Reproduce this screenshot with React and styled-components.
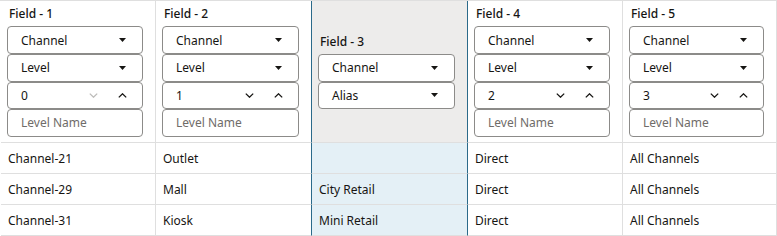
import React from "react";
import styled, { createGlobalStyle } from "styled-components";

const Global = createGlobalStyle`
  html, body { margin: 0; padding: 0; background: #fff; }
  body { font-family: "Noto Sans", "Liberation Sans", sans-serif; color: #161513; }
`;

const GRID = "155px 156px 156px 155px 154px";
const BLUE = "#2b6a8a";
const LINE = "#dfdfdf";

const Table = styled.div`
  display: grid;
  grid-template-columns: ${GRID};
  width: 777px;
  box-sizing: border-box;
  padding-left: 1px;
  border-top: 1px solid ${LINE};
`;

const HeadCell = styled.div`
  box-sizing: border-box;
  height: 142px;
  display: flex;
  flex-direction: column;
  justify-content: center;
  padding: 0 12px 0 6px;
  background: ${(p) => (p.$active ? "#edeceb" : "#fff")};
  border-right: 1px solid ${(p) => (p.$edge ? BLUE : LINE)};
  border-bottom: 1px solid ${LINE};
`;

const Label = styled.div`
  font-size: 12px;
  font-weight: 500;
  line-height: 16px;
  padding-left: 2px;
  margin-bottom: 4px;
`;

const Box = styled.div`
  box-sizing: border-box;
  height: 27.6px;
  border: 1px solid #8c8b89;
  border-radius: 4px;
  background: #fff;
  display: flex;
  align-items: center;
  padding: 0 0 0 13px;
  font-size: 12px;
  color: ${(p) => (p.$placeholder ? "#6f6c69" : "#161513")};
`;

const BoxText = styled.span`
  flex: 1;
`;

const IconSlot = styled.span`
  width: 29px;
  display: flex;
  justify-content: center;
  align-items: center;
  color: ${(p) => (p.$disabled ? "#bdbcba" : "#161513")};
  &:last-child { margin-right: 5px; }
`;

const Cell = styled.div`
  box-sizing: border-box;
  height: 31px;
  display: flex;
  align-items: center;
  padding-left: 7px;
  font-size: 12px;
  background: ${(p) => (p.$active ? "#e4f0f6" : "#fff")};
  border-right: 1px solid ${(p) => (p.$edge ? BLUE : LINE)};
  border-bottom: 1px solid ${LINE};
`;

const Caret = () => (
  <svg width="7" height="4" viewBox="0 0 7 4">
    <path d="M0 0 L7 0 L3.5 4 Z" fill="currentColor" />
  </svg>
);

const Chevron = ({ up }) => (
  <svg width="9" height="5" viewBox="0 0 9 5">
    <path
      d={up ? "M0.8 4.4 L4.5 0.8 L8.2 4.4" : "M0.8 0.6 L4.5 4.2 L8.2 0.6"}
      fill="none"
      stroke="currentColor"
      strokeWidth="1.3"
    />
  </svg>
);

const Select = ({ value }) => (
  <Box>
    <BoxText>{value}</BoxText>
    <IconSlot>
      <Caret />
    </IconSlot>
  </Box>
);

const Spinner = ({ value, downDisabled }) => (
  <Box>
    <BoxText>{value}</BoxText>
    <IconSlot $disabled={downDisabled}>
      <Chevron />
    </IconSlot>
    <IconSlot>
      <Chevron up />
    </IconSlot>
  </Box>
);

const TextInput = ({ placeholder }) => (
  <Box $placeholder>
    <BoxText>{placeholder}</BoxText>
  </Box>
);

const fields = [
  { label: "Field - 1", level: "0", min: true },
  { label: "Field - 2", level: "1" },
  { label: "Field - 3", alias: true },
  { label: "Field - 4", level: "2" },
  { label: "Field - 5", level: "3" },
];

const rows = [
  ["Channel-21", "Outlet", "", "Direct", "All Channels"],
  ["Channel-29", "Mall", "City Retail", "Direct", "All Channels"],
  ["Channel-31", "Kiosk", "Mini Retail", "Direct", "All Channels"],
];

const ACTIVE = 2;

export default function App() {
  const edge = (i) => i === ACTIVE || i === ACTIVE - 1;
  return (
    <>
      <Global />
      <Table>
        {fields.map((f, i) => (
          <HeadCell key={f.label} $active={i === ACTIVE} $edge={edge(i)}>
            <Label>{f.label}</Label>
            <Select value="Channel" />
            {f.alias ? (
              <Select value="Alias" />
            ) : (
              <>
                <Select value="Level" />
                <Spinner value={f.level} downDisabled={f.min} />
                <TextInput placeholder="Level Name" />
              </>
            )}
          </HeadCell>
        ))}
        {rows.map((r, ri) =>
          r.map((c, ci) => (
            <Cell key={`${ri}-${ci}`} $active={ci === ACTIVE} $edge={edge(ci)}>
              {c}
            </Cell>
          ))
        )}
      </Table>
    </>
  );
}
